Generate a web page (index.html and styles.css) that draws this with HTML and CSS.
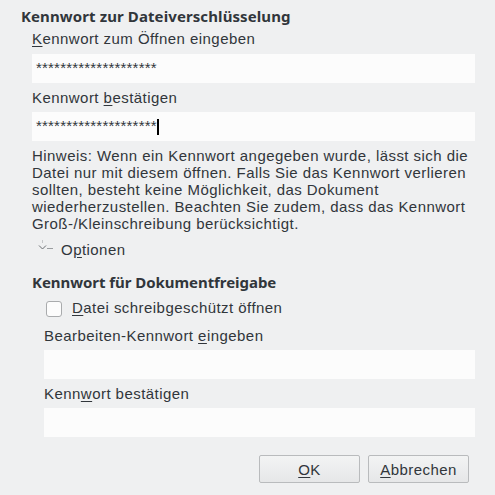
FILE: index.html
```html
<!DOCTYPE html>
<html lang="de">
<head>
<meta charset="utf-8">
<title>Kennwort festlegen</title>
<link rel="stylesheet" href="styles.css">
</head>
<body>
<div class="dialog">
  <h2 class="section-title">Kennwort zur Dateiverschlüsselung</h2>
  <div class="section">
    <div class="label first"><u>K</u>ennwort zum Öffnen eingeben</div>
    <div class="entry"><span class="stars">********************</span></div>
    <div class="label">Kennwort <u>b</u>estätigen</div>
    <div class="entry"><span class="stars">********************</span><span class="cursor"></span></div>
    <p class="hint">Hinweis: Wenn ein Kennwort angegeben wurde, lässt sich die<br>Datei nur mit diesem öffnen. Falls Sie das Kennwort verlieren<br>sollten, besteht keine Möglichkeit, das Dokument<br>wiederherzustellen. Beachten Sie zudem, dass das Kennwort<br>Groß-/Kleinschreibung berücksichtigt.</p>
    <div class="expander">
      <svg class="exp-icon" width="18" height="20" viewBox="0 0 18 20">
        <line x1="4.5" y1="-2" x2="4.5" y2="3" stroke="#c4c6c8" stroke-width="1"/>
        <polyline points="1,5.5 4.5,9 8,5.5" fill="none" stroke="#6a6e72" stroke-width="1"/>
        <line x1="9" y1="8.5" x2="15" y2="8.5" stroke="#9a9da0" stroke-width="1"/>
      </svg>
      <span>O<u>p</u>tionen</span>
    </div>
  </div>
  <h2 class="section-title second">Kennwort für Dokumentfreigabe</h2>
  <div class="section inner">
    <div class="check-row"><span class="checkbox"></span><span><u>D</u>atei schreibgeschützt öffnen</span></div>
    <div class="label edit">Bearbeiten-Kennwort <u>e</u>ingeben</div>
    <div class="entry"></div>
    <div class="label">Kenn<u>w</u>ort bestätigen</div>
    <div class="entry"></div>
  </div>
  <div class="buttons">
    <button class="btn"><u>O</u>K</button>
    <button class="btn"><u>A</u>bbrechen</button>
  </div>
</div>
</body>
</html>
```
FILE: styles.css
```css
html, body {
  margin: 0;
  padding: 0;
  background: #eff0f1;
}
body {
  font-family: "Liberation Sans", Arial, sans-serif;
  font-size: 15px;
  letter-spacing: 0.45px;
  color: #31363b;
}
.dialog {
  display: flex;
  flex-direction: column;
  padding: 6px 20px 0 21px;
}
.section-title {
  margin: 0;
  font-family: "Noto Sans", sans-serif;
  font-weight: bold;
  font-size: 15px;
  line-height: 20px;
  letter-spacing: 0.1px;
  color: #31363b;
}
.section-title.second {
  margin-top: 12px;
  margin-left: 11px;
  letter-spacing: -0.05px;
}
.section {
  display: flex;
  flex-direction: column;
  padding-left: 11px;
}
.section.inner {
  padding-left: 23px;
}
.label {
  line-height: 20px;
  margin-top: 5px;
}
.label.first {
  margin-top: 3px;
}
.label.edit {
  margin-top: 8px;
}
u {
  text-decoration: underline;
  text-underline-offset: 2px;
}
.entry {
  margin-top: 4px;
  height: 29px;
  background: #fcfcfc;
  display: flex;
  align-items: center;
  padding-left: 4px;
}
.label.first + .entry {
  margin-top: 5px;
}
.stars {
  line-height: 20px;
  letter-spacing: 0.2px;
  position: relative;
  top: -1px;
}
.cursor {
  display: inline-block;
  width: 2px;
  height: 16px;
  background: #000;
  margin-left: 0;
}
.hint {
  margin: 6px 0 0 0;
  line-height: 17px;
  white-space: nowrap;
}
.expander {
  margin-top: 8px;
  display: flex;
  align-items: center;
  height: 20px;
  line-height: 20px;
  padding-left: 6px;
}
.exp-icon {
  margin-right: 5px;
  flex: none;
}
.check-row {
  margin-top: 6px;
  display: flex;
  align-items: center;
  height: 20px;
  line-height: 20px;
}
.checkbox {
  width: 14px;
  height: 14px;
  border: 1px solid #a9abad;
  border-radius: 3px;
  background: #fcfcfc;
  margin-left: 2px;
  margin-right: 10px;
  position: relative;
  top: 1px;
}
.buttons {
  margin-top: 18px;
  display: flex;
  justify-content: flex-end;
  gap: 8px;
  padding-right: 6px;
}
.btn {
  width: 101px;
  height: 28px;
  border: 1px solid #b9bbbd;
  border-radius: 2px;
  background: linear-gradient(#f3f4f4, #e6e7e8);
  font-family: "Liberation Sans", Arial, sans-serif;
  font-size: 15px;
  letter-spacing: 0.45px;
  color: #31363b;
  padding: 0;
}
```
